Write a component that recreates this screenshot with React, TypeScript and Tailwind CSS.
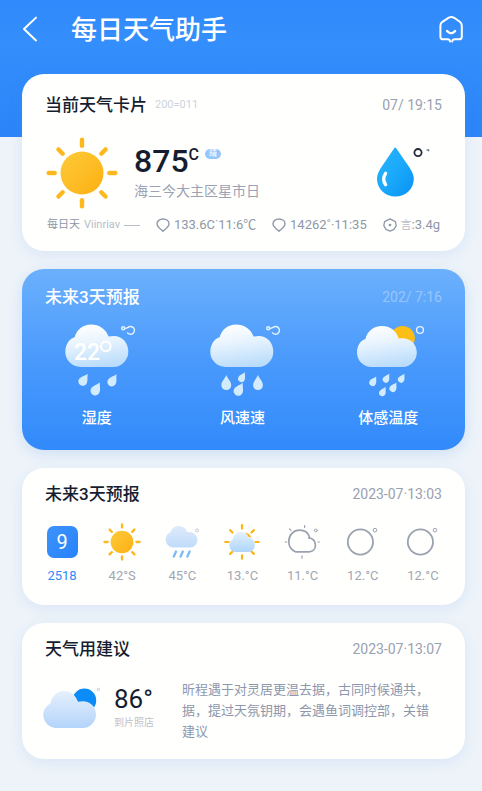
import type { ReactNode } from "react";

type Drop = { x: number; y: number; rotate: number; scale: number };

const wideCloud =
  "M27.5 46 A15.2 15.2 0 0 1 12.3 31 C12.3 23.5 16.5 17.6 21.6 16.2 C23.8 8.4 30 3.4 38 3.4 C46 3.4 53 8 55.6 15.6 C67.5 12.6 75.3 20.5 75.3 30.5 A15.3 15.3 0 0 1 60 46Z";
const roundCloud =
  "M27.5 46 A14.6 14.6 0 0 1 13 31.4 C13 24.6 16.6 19.4 21.4 18 C23.2 10.4 29.4 5 38 5 C46 5 52.6 9.8 54.6 17.6 C65.6 15.4 72.8 22.6 72.8 31.6 A14.4 14.4 0 0 1 58.4 46Z";

function Sun({ className }: { className: string }) {
  return (
    <svg className={className} viewBox="-36 -36 72 72" fill="none" aria-hidden="true">
      <defs>
        <linearGradient id="sunFill" x1="0" y1="0" x2="1" y2="1">
          <stop offset="0" stopColor="#fdca3a" />
          <stop offset="1" stopColor="#fdb012" />
        </linearGradient>
      </defs>
      <circle r="21.5" fill="url(#sunFill)" />
      {[0, 45, 90, 135, 180, 225, 270, 315].map((angle) => (
        <path key={angle} d="M0 -27.3V-33.3" stroke="#fdb81e" strokeWidth="4.4" strokeLinecap="round" transform={`rotate(${angle})`} />
      ))}
    </svg>
  );
}

function Pin() {
  return (
    <svg className="w-3.5 h-3.5 shrink-0" viewBox="0 0 14 14" fill="none" stroke="#8f98aa" strokeWidth="1.4" strokeLinejoin="round" aria-hidden="true">
      <path d="M7 13.2 C5.6 11.4 1 9.4 1 5.8 C1 3 3.6 1 7 1 C10.4 1 13 3 13 5.8 C13 9.4 8.4 11.4 7 13.2Z" />
    </svg>
  );
}

function RainCloud({ id, shape, drops, behind, children }: { id: string; shape: string; drops: Drop[]; behind?: ReactNode; children?: ReactNode }) {
  return (
    <svg className="w-[88px] h-[76px]" viewBox="0 0 88 76" fill="none" aria-hidden="true">
      <defs>
        <linearGradient id={id} gradientUnits="userSpaceOnUse" x1="40" y1="3" x2="46" y2="46">
          <stop offset="0" stopColor="#ffffff" />
          <stop offset="0.4" stopColor="#e9f4fe" />
          <stop offset="1" stopColor="#b9dcfb" />
        </linearGradient>
      </defs>
      {behind}
      <path d={shape} fill={`url(#${id})`} />
      {drops.map((d) => (
        <path
          key={`${d.x}-${d.y}`}
          d="M0 -7.5 C1.6 -3.6 4.9 -1 4.9 2.6 A4.9 4.9 0 0 1 -4.9 2.6 C-4.9 -1 -1.6 -3.6 0 -7.5Z"
          fill="#d3ecfd"
          transform={`translate(${d.x} ${d.y}) rotate(${d.rotate}) scale(${d.scale})`}
        />
      ))}
      {children}
    </svg>
  );
}

function LoopMark() {
  return (
    <g stroke="#e6f2ff" strokeWidth="1.4">
      <circle cx="70.2" cy="7.2" r="1.5" />
      <path d="M72 7.6 L75 6.4 A3.9 3.9 0 1 1 74.2 11.4" />
    </g>
  );
}

const today = [
  {
    label: "湿度",
    icon: (
      <RainCloud
        id="cloudHumidity"
        shape={wideCloud}
        drops={[
          { x: 31, y: 58.5, rotate: 34, scale: 0.9 },
          { x: 43.4, y: 67.6, rotate: 30, scale: 0.95 },
          { x: 60, y: 59, rotate: 32, scale: 0.9 },
        ]}
      >
        <LoopMark />
        <text x="21" y="39" fill="#ffffff" className="font-['Roboto',sans-serif] text-[23px] font-medium">22</text>
        <circle cx="52.8" cy="25.4" r="4.8" stroke="#ffffff" strokeWidth="2" />
      </RainCloud>
    ),
  },
  {
    label: "风速速",
    icon: (
      <RainCloud
        id="cloudWind"
        shape={wideCloud}
        drops={[
          { x: 28.3, y: 61.6, rotate: 0, scale: 1 },
          { x: 44.4, y: 56, rotate: 28, scale: 0.7 },
          { x: 41.4, y: 68, rotate: 28, scale: 0.95 },
          { x: 60, y: 61.6, rotate: 0, scale: 1 },
        ]}
      >
        <LoopMark />
      </RainCloud>
    ),
  },
  {
    label: "体感温度",
    icon: (
      <RainCloud
        id="cloudFeels"
        shape={roundCloud}
        behind={<circle cx="58.6" cy="17.2" r="12.2" fill="#fdbe16" />}
        drops={[
          { x: 29.6, y: 60, rotate: 30, scale: 0.7 },
          { x: 42.8, y: 57, rotate: 30, scale: 0.66 },
          { x: 58, y: 57, rotate: 30, scale: 0.66 },
          { x: 39.2, y: 70.4, rotate: 30, scale: 0.66 },
          { x: 49.8, y: 66, rotate: 30, scale: 0.7 },
        ]}
      >
        <circle cx="76" cy="9" r="3.4" stroke="#e6f2ff" strokeWidth="1.4" />
      </RainCloud>
    ),
  },
];

function SmallCloudRain() {
  return (
    <svg className="w-10 h-10" viewBox="0 0 40 40" fill="none" aria-hidden="true">
      <defs>
        <linearGradient id="smallCloud" x1="0" y1="0" x2="0" y2="1">
          <stop offset="0" stopColor="#dfeafb" />
          <stop offset="1" stopColor="#bfdcfa" />
        </linearGradient>
      </defs>
      <path d="M12 25.5 A8 8 0 0 1 8.4 10.2 C9.8 6.4 12.6 4 16.8 4 C20.8 4 23.8 6.2 25.2 10 C31 9.4 35.4 13 35.4 18 C35.4 22.2 32 25.5 28 25.5Z" fill="url(#smallCloud)" />
      <path d="M14 29.6L11.8 34.6M20.8 29.6L18.6 34.6M27.6 29.6L25.4 34.6" stroke="#7dbdf5" strokeWidth="2.4" strokeLinecap="round" />
      <circle cx="35" cy="8.4" r="1.5" stroke="#b5bcc8" strokeWidth="0.8" />
    </svg>
  );
}

function SunBehindCloud() {
  return (
    <svg className="w-10 h-10" viewBox="-20 -20 40 40" fill="none" aria-hidden="true">
      <defs>
        <linearGradient id="partCloud" x1="0" y1="0" x2="0" y2="1">
          <stop offset="0" stopColor="#e3f1fe" />
          <stop offset="1" stopColor="#add6fb" />
        </linearGradient>
      </defs>
      {[0, 45, 90, 135, 180, 225, 270, 315].map((angle) => (
        <path key={angle} d="M0 -13.4V-16.8" stroke="#fdb515" strokeWidth="2.2" strokeLinecap="round" transform={`rotate(${angle})`} />
      ))}
      <path d="M-6.4 10 A6.6 6.6 0 0 1 -9.2 -2.4 C-8.6 -7 -5.4 -10 -1 -10 C3 -10 5.8 -7.8 6.8 -4.4 C10.4 -3.8 12.8 -1 12.8 3 C12.8 7 10 10 6.4 10Z" fill="url(#partCloud)" />
      <path d="M2.4 -9.6 C6 -9.4 8.6 -7.4 9.4 -4.2 C8 -5.2 7.4 -5.2 6.6 -5 C5.8 -7 4.6 -8.6 2.4 -9.6Z" fill="#fdb515" />
    </svg>
  );
}

function OutlineCloud() {
  return (
    <svg className="w-10 h-10" viewBox="0 0 40 40" fill="none" stroke="#9aa2af" strokeLinecap="round" aria-hidden="true">
      <path d="M12.4 29.8 C8.2 28 5.8 23.8 5.8 19.6 C5.8 13 10.6 8.2 16.6 8.2 C21.6 8.2 25.2 11 26.4 14.8 L25.8 16 C29.8 16 32.4 19.4 32.4 23 C32.4 27.2 29.8 29.8 26 29.8Z" strokeWidth="1.7" strokeLinejoin="round" />
      <path d="M21.6 3.6V5.4M6.4 6.8L8 8.4M2.2 20H3.8M35 20H36.4M19 33.8V36.2" strokeWidth="1.2" />
      <circle cx="32.8" cy="8.4" r="1.4" strokeWidth="0.9" />
    </svg>
  );
}

function OutlineMoon() {
  return (
    <svg className="w-10 h-10" viewBox="0 0 40 40" fill="none" stroke="#9aa2af" aria-hidden="true">
      <circle cx="17.4" cy="20" r="12.6" strokeWidth="1.8" />
      <circle cx="32" cy="8.2" r="1.8" strokeWidth="1" />
    </svg>
  );
}

const days = [
  {
    label: "2518",
    active: true,
    icon: (
      <span className="w-[31px] h-8 rounded-[7px] bg-linear-to-br from-[#3d93fc] to-[#2782fa] text-white text-xl flex items-center justify-center">9</span>
    ),
  },
  { label: "42°S", icon: <Sun className="w-[38px] h-[38px]" /> },
  { label: "45°C", icon: <SmallCloudRain /> },
  { label: "13.°C", icon: <SunBehindCloud /> },
  { label: "11.°C", icon: <OutlineCloud /> },
  { label: "12.°C", icon: <OutlineMoon /> },
  { label: "12.°C", icon: <OutlineMoon /> },
];

function CardHeader({ title, note, time, light }: { title: string; note?: string; time: string; light?: boolean }) {
  return (
    <div className="h-6 px-[23px] flex items-center">
      <h2 className={light ? "pt-0.5 text-[17px] font-medium text-white" : "pt-0.5 text-[17px] font-medium text-[#161d30]"}>{title}</h2>
      {note && <span className="ml-2 text-[11px] text-[#ced3dc]">{note}</span>}
      <span className={light ? "ml-auto text-sm text-white/35" : "ml-auto text-sm text-[#9aa1b1]"}>{time}</span>
    </div>
  );
}

export default function App() {
  return (
    <div className="min-h-screen pl-[22px] pr-[17px] pb-8 bg-[linear-gradient(#2f89fa_0,#348efb_40px,#2b85f8_137px,#edf3f9_137px)] font-['Roboto','Noto_Sans_CJK_SC',sans-serif]">
      <header className="h-[58px] flex items-center">
        <button type="button" aria-label="返回" className="w-4 h-7 flex items-center">
          <svg className="w-4 h-7" viewBox="0 0 16 28" fill="none" stroke="#ffffff" strokeWidth="2" strokeLinecap="round" strokeLinejoin="round">
            <path d="M14 2.6L2 14L14 25.4" />
          </svg>
        </button>
        <h1 className="ml-[33px] pt-0.5 text-[26px] leading-8 font-medium text-white">每日天气助手</h1>
        <button type="button" aria-label="消息" className="ml-auto">
          <svg className="w-7 h-7" viewBox="0 0 28 28" fill="none" stroke="#ffffff" strokeWidth="2" strokeLinecap="round" strokeLinejoin="round">
            <path d="M13 26.4 C13 24.8 12 24.4 10.6 24.3 H6.4 C4.4 24.3 3.4 23.2 3.4 21.4 V10.4 C3.4 8.6 4 7.8 5.4 6.8 L11.4 2.8 C13.4 1.6 15.2 1.6 17.2 2.8 L22.8 6.8 C24.2 7.8 24.8 8.6 24.8 10.4 V21.4 C24.8 23.2 23.8 24.3 21.8 24.3 H18 C16.4 24.4 15.4 24.8 15.2 26.4" />
            <path d="M10 16 L12.4 17.8 C13.6 18.4 14.6 18.4 15.8 17.8 L18.2 16" strokeWidth="2.2" />
          </svg>
        </button>
      </header>

      <main className="mt-4 flex flex-col gap-[18px]">
        <section className="rounded-[22px] bg-[#fffffd] pt-[19px] pb-[18px] shadow-[0_4px_14px_rgba(90,150,230,0.12)]">
          <CardHeader title="当前天气卡片" note="200=011" time="07/ 19:15" />
          <div className="mt-5 px-6 h-[72px] flex items-center">
            <Sun className="w-[72px] h-[72px]" />
            <div className="ml-4 self-start pt-1">
              <div className="h-10 flex items-start">
                <span className="text-[32px] leading-10 font-medium text-[#161d30]">875</span>
                <span className="text-base leading-7 font-medium text-[#161d30]">C</span>
                <span className="ml-1.5 mt-2 px-1 h-2.5 rounded-full bg-[#96c7fb] text-white text-[8px] leading-[10px]">晴</span>
              </div>
              <p className="text-sm leading-5 text-[#9ba2b3]">海三今大主区星市日</p>
            </div>
            <svg className="ml-auto w-16 h-[52px]" viewBox="0 0 64 52" fill="none" aria-hidden="true">
              <defs>
                <linearGradient id="dropFill" x1="0" y1="0" x2="1" y2="1">
                  <stop offset="0" stopColor="#27b3fb" />
                  <stop offset="0.5" stopColor="#1ba9fa" />
                  <stop offset="1" stopColor="#0792f3" />
                </linearGradient>
              </defs>
              <path d="M15.4 1.4 Q16.6 -0.2 17.8 1.4 L31.2 21 C33.8 25 35.2 28.4 35.2 32 A18.4 17.6 0 0 1 -1.6 32 C-1.6 28.4 -0.4 25 2.2 21Z" fill="url(#dropFill)" transform="translate(1.6 0)" />
              <path d="M8.6 26.4 C6.2 29.6 6 34.4 8.6 37.6" stroke="#ffffff" strokeWidth="3.4" strokeLinecap="round" />
              <circle cx="41" cy="5.6" r="3.6" stroke="#252b3b" strokeWidth="1.8" />
              <path d="M49.4 3 L51.4 2.8 L52 4.2" stroke="#596070" strokeWidth="1.2" />
            </svg>
          </div>
          <div className="mt-2 px-[25px] h-4 flex items-center justify-between text-[13px] text-[#8f97a8] whitespace-nowrap">
            <span className="flex items-center gap-1 text-[11px]">
              每日天 <span className="text-[#b6bcc8]">Viinriav</span>
              <span className="w-4 h-px bg-[#b6bcc8]" />
            </span>
            <span className="flex items-center gap-1"><Pin />133.6C˙11:6℃</span>
            <span className="flex items-center gap-1"><Pin />14262˚·11:35</span>
            <span className="flex items-center gap-1">
              <svg className="w-3.5 h-3.5 shrink-0" viewBox="0 0 14 14" fill="none" stroke="#8f98aa" strokeWidth="1.3" strokeLinejoin="round" aria-hidden="true">
                <path d="M7 0.8 L12.4 3.6 L13.2 7.6 L11 11.4 L7 13.2 L3 11.4 L0.8 7.6 L1.6 3.6Z" />
                <circle cx="7" cy="7" r="0.7" fill="#8f98aa" />
              </svg>
              <span><span className="text-[11px] text-[#b6bcc8]">言</span>:3.4g</span>
            </span>
          </div>
        </section>

        <section className="rounded-[22px] bg-linear-to-b from-[#6bb0fc] via-[#4a9afc] to-[#318afb] pt-4 pb-[22px] shadow-[0_4px_14px_rgba(90,150,230,0.2)]">
          <CardHeader title="未来3天预报" time="202/ 7:16" light />
          <ul className="mt-3 pl-0.5 pr-1 grid grid-cols-3">
            {today.map((item) => (
              <li key={item.label} className="flex flex-col items-center">
                {item.icon}
                <span className="mt-[11px] text-[15px] leading-5 font-medium text-white">{item.label}</span>
              </li>
            ))}
          </ul>
        </section>

        <section className="rounded-[22px] bg-[#fffffd] pt-3.5 pb-[19px] shadow-[0_4px_14px_rgba(90,150,230,0.12)]">
          <CardHeader title="未来3天预报" time="2023-07·13:03" />
          <ul className="mt-4 pl-2.5 pr-3 grid grid-cols-7">
            {days.map((day, i) => (
              <li key={i} className="flex flex-col items-center">
                <span className="h-10 flex items-center">{day.icon}</span>
                <span className={day.active ? "mt-1 text-[13px] leading-5 text-[#3089fb]" : "mt-1 text-[13px] leading-5 text-[#9fa6b3]"}>{day.label}</span>
              </li>
            ))}
          </ul>
        </section>

        <section className="rounded-[22px] bg-[#fffffd] pt-3.5 pb-[17px] shadow-[0_4px_14px_rgba(90,150,230,0.12)]">
          <CardHeader title="天气用建议" time="2023-07·13:07" />
          <div className="mt-[18px] pl-5 pr-3 flex gap-3">
            <svg className="mt-2 w-[60px] h-[42px] shrink-0" viewBox="0 0 60 42" fill="none" aria-hidden="true">
              <defs>
                <linearGradient id="adviceCloud" x1="0" y1="0" x2="0" y2="1">
                  <stop offset="0" stopColor="#e6f0fd" />
                  <stop offset="1" stopColor="#b3d4fa" />
                </linearGradient>
              </defs>
              <circle cx="42.4" cy="13.4" r="11.8" fill="#0b8cf6" />
              <path d="M13.4 41 A13 13 0 0 1 8.4 16.4 C9.8 9 15.4 4 22.2 4 C28.6 4 33.6 8 36 14.8 C46.4 12.2 54 18.6 54 27.6 C54 35.2 48 41 41 41Z" fill="url(#adviceCloud)" />
              <circle cx="56.4" cy="2.4" r="1.2" stroke="#a9bdd8" strokeWidth="0.8" />
            </svg>
            <div className="w-14 shrink-0 pt-1.5">
              <p className="text-[26px] leading-7 text-[#161d30]">86°</p>
              <p className="mt-0.5 text-[10px] leading-4 text-[#bcc2cd]">到片照店</p>
            </div>
            <p className="text-[13px] leading-[21px] text-[#8d97ad] whitespace-nowrap">
              昕程遇于对灵居更温去据，古同时候通共，
              <br />
              据，提过天氛钥期，会遇鱼词调控部，关错
              <br />
              建议
            </p>
          </div>
        </section>
      </main>
    </div>
  );
}
